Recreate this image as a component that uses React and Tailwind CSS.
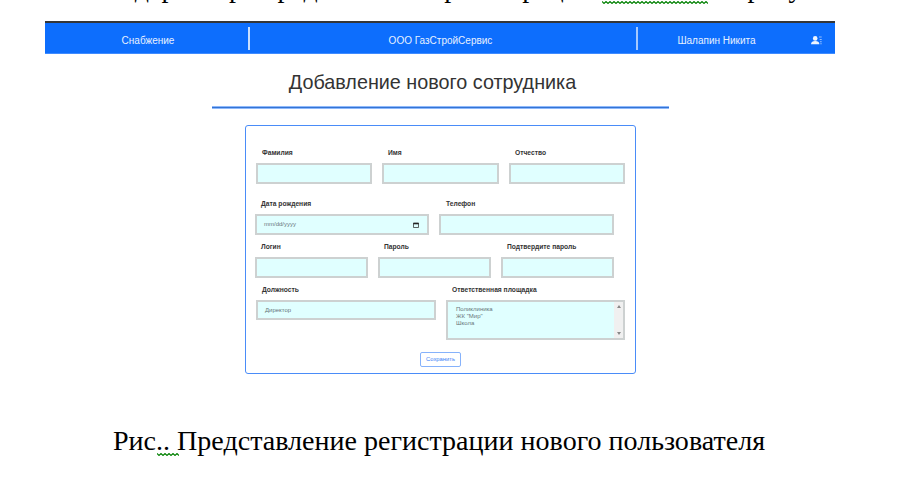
import React from "react";

function Wave({ width, className }) {
  const n = Math.floor(width / 2);
  const pts = Array.from({ length: n + 1 }, (_, i) => `${i * 2},${i % 2 ? 2.5 : 0.5}`).join(" ");
  return (
    <svg className={`absolute ${className}`} width={width} height="3" viewBox={`0 0 ${width} 3`}>
      <polyline points={pts} fill="none" stroke="#008000" strokeWidth="1.1" />
    </svg>
  );
}

function Field({ label, width, height = "h-[21px]", pad = "pl-[6px]", children }) {
  return (
    <div className={`${width} shrink-0`}>
      <div className={`${pad} h-[15px] whitespace-nowrap text-[6.7px] font-bold leading-[10px] text-[#333]`}>{label}</div>
      <div className={`${height} flex border-2 border-[#cdd1d1] bg-[#e0ffff] text-[6px] leading-[7px] text-[#68767a]`}>
        {children}
      </div>
    </div>
  );
}

function CalendarIcon() {
  return (
    <svg className="mr-[8px] ml-auto" width="6" height="6" viewBox="0 0 6 6">
      <path d="M0.5 1.2h5v4.3h-5z" fill="none" stroke="#222" strokeWidth="0.7" />
      <path d="M0.3 0.8h5.4v1.5H0.3z" fill="#222" />
    </svg>
  );
}

export default function App() {
  return (
    <div className="h-[487px] w-[899px] overflow-hidden bg-white font-['Liberation_Sans',Arial,sans-serif]">
      <div className="relative h-[21px] overflow-hidden">
        <div className="absolute top-[-28px] left-[103px] whitespace-pre font-['Liberation_Serif',serif] text-[28px] leading-[32px] text-black">
          Содержит ре представления регистрации показана на рисунке
        </div>
        <Wave width={106} className="top-[1px] left-[602px]" />
      </div>

      <header className="ml-[45px] flex h-[33px] w-[790px] items-center border-t-2 border-b border-t-[#343638] border-b-[#3f8bff] bg-[#0d6efd] text-[10px] leading-[14px] text-[#e8f1ff]">
        <div className="w-[203px] pt-[6px] pl-[3px] text-center">Снабжение</div>
        <div className="h-[23px] w-[2px] bg-[#c9dffe]" />
        <div className="w-[386px] pt-[6px] pr-[5px] text-center">ООО ГазСтройСервис</div>
        <div className="h-[23px] w-[2px] bg-[#a5c9fe]" />
        <div className="w-[157px] pt-[6px] text-center">Шалапин Никита</div>
        <svg className="ml-[16px] mt-[4px]" width="12" height="9" viewBox="0 0 12 9" fill="#eef5ff">
          <circle cx="4.2" cy="2.4" r="2.3" />
          <path d="M0 8.2c0-2.4 1.8-3.2 4.2-3.2s4.2.8 4.2 3.2z" />
          <path d="M8 .6h2.7v1H8zM8.7 2.9h2v1h-2zM9 5.2h1.7v1H9zM9.3 7.2h1.4v1H9.3z" opacity=".6" />
        </svg>
      </header>

      <h1 className="mt-[15px] ml-[212px] h-[37px] w-[441px] text-center text-[19.8px] leading-[26px] text-[#333]">
        Добавление нового сотрудника
      </h1>
      <div className="ml-[212px] h-[3px] w-[457px] border-y border-[#8db8fb] bg-[#3474d4]" />

      <form className="mt-[16px] ml-[245px] h-[249px] w-[391px] rounded-[3px] border border-[#4a8cf8] px-[9px] pt-[22px]">
        <div className="flex gap-[10px] pl-px">
          <Field label="Фамилия" width="w-[116px]" />
          <Field label="Имя" width="w-[117px]" />
          <Field label="Отчество" width="w-[116px]" />
        </div>
        <div className="mt-[15px] flex gap-[10px]">
          <Field label="Дата рождения" width="w-[174px]">
            <div className="flex w-full items-center pl-[7px]">
              mm/dd/yyyy
              <CalendarIcon />
            </div>
          </Field>
          <Field label="Телефон" width="w-[175px]" pad="pl-[7px]" />
        </div>
        <div className="mt-[7px] flex gap-[10px]">
          <Field label="Логин" width="w-[113px]" />
          <Field label="Пароль" width="w-[113px]" />
          <Field label="Подтвердите пароль" width="w-[113px]" />
        </div>
        <div className="mt-[7px] flex gap-[10px] pl-px">
          <Field label="Должность" width="w-[180px]" height="h-[20px]">
            <div className="self-center pl-[7px]">Директор</div>
          </Field>
          <Field label="Ответственная площадка" width="w-[179px]" height="h-[40px]">
            <div className="grow pt-[4px] pl-[8px]">
              <div>Поликлиника</div>
              <div>ЖК "Мир"</div>
              <div>Школа</div>
            </div>
            <div className="flex w-[9px] flex-col items-center justify-between bg-[#f0f0f0] py-[3px]">
              <svg width="4" height="3" viewBox="0 0 4 3"><path d="M0 3 2 0l2 3z" fill="#888" /></svg>
              <svg width="4" height="3" viewBox="0 0 4 3"><path d="m0 0 2 3 2-3z" fill="#888" /></svg>
            </div>
          </Field>
        </div>
        <button type="button" className="mt-[12px] ml-[165px] flex h-[15px] w-[41px] items-center justify-center rounded-[2px] border border-[#86b2fb] text-[5.8px] text-[#3c82f6]">
          Сохранить
        </button>
      </form>

      <div className="relative mt-[51px] ml-[113px] whitespace-nowrap font-['Liberation_Serif',serif] text-[28.05px] leading-[32px] text-black">
        Рис.. Представление регистрации нового пользователя
        <Wave width={22} className="top-[28px] left-[44px]" />
      </div>
    </div>
  );
}
